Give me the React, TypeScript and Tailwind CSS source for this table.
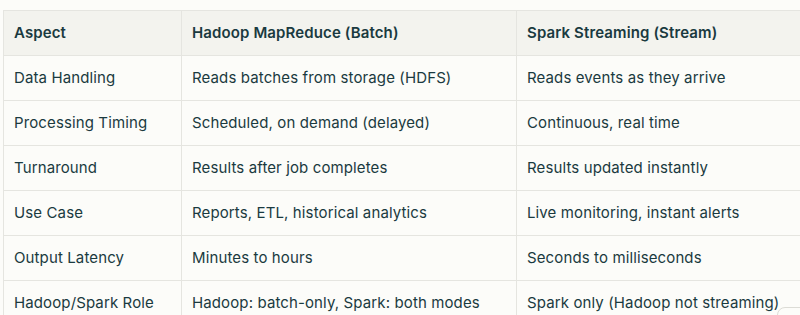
const ROWS = [
  ["Data Handling", "Reads batches from storage (HDFS)", "Reads events as they arrive"],
  ["Processing Timing", "Scheduled, on demand (delayed)", "Continuous, real time"],
  ["Turnaround", "Results after job completes", "Results updated instantly"],
  ["Use Case", "Reports, ETL, historical analytics", "Live monitoring, instant alerts"],
  ["Output Latency", "Minutes to hours", "Seconds to milliseconds"],
  ["Hadoop/Spark Role", "Hadoop: batch-only, Spark: both modes", "Spark only (Hadoop not streaming)"],
];

export default function App() {
  return (
    <div className="relative h-[315px] w-[800px] overflow-hidden bg-[#fcfcf9] pl-[3px] pt-[10px] font-['Inter',sans-serif] text-[15px] tracking-[0.12px] text-[#1a3a40]">
      <table className="w-[860px] table-fixed border-collapse border border-[#e5e5e0]">
        <colgroup>
          <col className="w-[178px]" />
          <col className="w-[335px]" />
          <col />
        </colgroup>
        <thead>
          <tr className="h-[45px] bg-[#f3f3ee]">
            <th className="border border-[#e5e5e0] px-[10px] text-left font-semibold">Aspect</th>
            <th className="border border-[#e5e5e0] px-[10px] text-left font-semibold">Hadoop MapReduce (Batch)</th>
            <th className="border border-[#e5e5e0] px-[10px] text-left font-semibold">Spark Streaming (Stream)</th>
          </tr>
        </thead>
        <tbody>
          {ROWS.map((row) => (
            <tr key={row[0]} className="h-[45px]">
              {row.map((cell, i) => (
                <td key={i} className="whitespace-nowrap border border-[#e5e5e0] px-[10px]">
                  {cell}
                </td>
              ))}
            </tr>
          ))}
        </tbody>
      </table>
      {/* floating button corner */}
      <div className="absolute left-[777px] top-[307px] z-10 h-[30px] w-[40px] rounded-lg border border-[#dcdcd6] bg-[#fcfcf9]" />
    </div>
  );
}
